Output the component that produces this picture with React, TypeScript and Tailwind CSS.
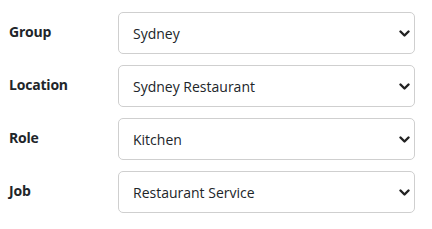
import React from "react";

const rows = [
  { label: "Group", value: "Sydney" },
  { label: "Location", value: "Sydney Restaurant" },
  { label: "Role", value: "Kitchen" },
  { label: "Job", value: "Restaurant Service" },
];

const Chevron = () => (
  <svg width="11" height="7" viewBox="0 0 11 7" className="shrink-0">
    <path d="M1.5 1.5l4 4 4-4" fill="none" stroke="#222" strokeWidth="2.4" strokeLinecap="round" strokeLinejoin="round" />
  </svg>
);

const App: React.FC = () => {
  return (
    <div
      className="w-[432px] h-[229px] bg-white pt-[12px] pl-[9px] pr-[17px] flex flex-col gap-[11px]"
      style={{ fontFamily: '"Open Sans", sans-serif' }}
    >
      {rows.map((row, i) => (
        <div key={i} className="flex items-center">
          <label className="w-[109px] shrink-0 text-[14px] font-bold text-[#212529] -mt-[4px] tracking-[-0.2px]">
            {row.label}
          </label>
          <div className="flex-1 h-[42px] border border-[#cfcfcf] rounded-[5px] flex items-center justify-between pl-[14px] pr-[4px]">
            <span className="text-[14px] text-[#212529]">{row.value}</span>
            <Chevron />
          </div>
        </div>
      ))}
    </div>
  );
};

export default App;
